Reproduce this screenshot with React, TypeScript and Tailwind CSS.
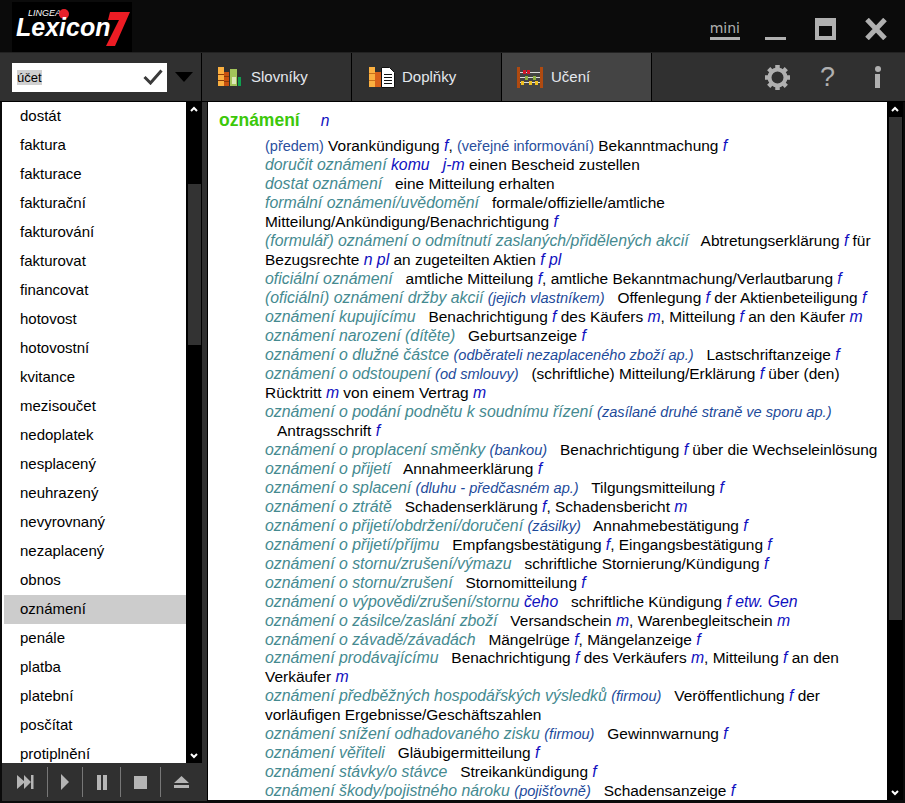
const WORDS = [
  "dostát", "faktura", "fakturace", "fakturační", "fakturování", "fakturovat", "financovat",
  "hotovost", "hotovostní", "kvitance", "mezisoučet", "nedoplatek", "nesplacený", "neuhrazený",
  "nevyrovnaný", "nezaplacený", "obnos", "oznámení", "penále", "platba", "platební", "posčítat",
  "protiplnění",
];

// t = teal phrase, b = blue note, n = italic note, g = gram (italic blue), x = plain german
type Part = ["t" | "b" | "n" | "g" | "x", string];

const ENTRY: Part[][] = [
  [["b", "(předem)"], ["x", " Vorankündigung "], ["g", "f"], ["x", ", "], ["b", "(veřejné informování)"], ["x", " Bekanntmachung "], ["g", "f"]],
  [["t", "doručit oznámení "], ["g", "komu   j-m"], ["x", " einen Bescheid zustellen"]],
  [["t", "dostat oznámení"], ["x", "   eine Mitteilung erhalten"]],
  [["t", "formální oznámení/uvědomění"], ["x", "   formale/offizielle/amtliche"]],
  [["x", "Mitteilung/Ankündigung/Benachrichtigung "], ["g", "f"]],
  [["t", "(formulář) oznámení o odmítnutí zaslaných/přidělených akcií"], ["x", "   Abtretungserklärung "], ["g", "f"], ["x", " für"]],
  [["x", "Bezugsrechte "], ["g", "n pl"], ["x", " an zugeteilten Aktien "], ["g", "f pl"]],
  [["t", "oficiální oznámení"], ["x", "   amtliche Mitteilung "], ["g", "f"], ["x", ", amtliche Bekanntmachung/Verlautbarung "], ["g", "f"]],
  [["t", "(oficiální) oznámení držby akcií "], ["n", "(jejich vlastníkem)"], ["x", "   Offenlegung "], ["g", "f"], ["x", " der Aktienbeteiligung "], ["g", "f"]],
  [["t", "oznámení kupujícímu"], ["x", "   Benachrichtigung "], ["g", "f"], ["x", " des Käufers "], ["g", "m"], ["x", ", Mitteilung "], ["g", "f"], ["x", " an den Käufer "], ["g", "m"]],
  [["t", "oznámení narození (dítěte)"], ["x", "   Geburtsanzeige "], ["g", "f"]],
  [["t", "oznámení o dlužné částce "], ["n", "(odběrateli nezaplaceného zboží ap.)"], ["x", "   Lastschriftanzeige "], ["g", "f"]],
  [["t", "oznámení o odstoupení "], ["n", "(od smlouvy)"], ["x", "   (schriftliche) Mitteilung/Erklärung "], ["g", "f"], ["x", " über (den)"]],
  [["x", "Rücktritt "], ["g", "m"], ["x", " von einem Vertrag "], ["g", "m"]],
  [["t", "oznámení o podání podnětu k soudnímu řízení "], ["n", "(zasílané druhé straně ve sporu ap.)"]],
  [["x", "   Antragsschrift "], ["g", "f"]],
  [["t", "oznámení o proplacení směnky "], ["n", "(bankou)"], ["x", "   Benachrichtigung "], ["g", "f"], ["x", " über die Wechseleinlösung"]],
  [["t", "oznámení o přijetí"], ["x", "   Annahmeerklärung "], ["g", "f"]],
  [["t", "oznámení o splacení "], ["n", "(dluhu - předčasném ap.)"], ["x", "   Tilgungsmitteilung "], ["g", "f"]],
  [["t", "oznámení o ztrátě"], ["x", "   Schadenserklärung "], ["g", "f"], ["x", ", Schadensbericht "], ["g", "m"]],
  [["t", "oznámení o přijetí/obdržení/doručení "], ["n", "(zásilky)"], ["x", "   Annahmebestätigung "], ["g", "f"]],
  [["t", "oznámení o přijetí/příjmu"], ["x", "   Empfangsbestätigung "], ["g", "f"], ["x", ", Eingangsbestätigung "], ["g", "f"]],
  [["t", "oznámení o stornu/zrušení/výmazu"], ["x", "   schriftliche Stornierung/Kündigung "], ["g", "f"]],
  [["t", "oznámení o stornu/zrušení"], ["x", "   Stornomitteilung "], ["g", "f"]],
  [["t", "oznámení o výpovědi/zrušení/stornu "], ["g", "čeho"], ["x", "   schriftliche Kündigung "], ["g", "f etw. Gen"]],
  [["t", "oznámení o zásilce/zaslání zboží"], ["x", "   Versandschein "], ["g", "m"], ["x", ", Warenbegleitschein "], ["g", "m"]],
  [["t", "oznámení o závadě/závadách"], ["x", "   Mängelrüge "], ["g", "f"], ["x", ", Mängelanzeige "], ["g", "f"]],
  [["t", "oznámení prodávajícímu"], ["x", "   Benachrichtigung "], ["g", "f"], ["x", " des Verkäufers "], ["g", "m"], ["x", ", Mitteilung "], ["g", "f"], ["x", " an den"]],
  [["x", "Verkäufer "], ["g", "m"]],
  [["t", "oznámení předběžných hospodářských výsledků "], ["n", "(firmou)"], ["x", "   Veröffentlichung "], ["g", "f"], ["x", " der"]],
  [["x", "vorläufigen Ergebnisse/Geschäftszahlen"]],
  [["t", "oznámení snížení odhadovaného zisku "], ["n", "(firmou)"], ["x", "   Gewinnwarnung "], ["g", "f"]],
  [["t", "oznámení věřiteli"], ["x", "   Gläubigermitteilung "], ["g", "f"]],
  [["t", "oznámení stávky/o stávce"], ["x", "   Streikankündigung "], ["g", "f"]],
  [["t", "oznámení škody/pojistného nároku "], ["n", "(pojišťovně)"], ["x", "   Schadensanzeige "], ["g", "f"]],
];

const PART_CLS = {
  t: "italic text-[15.85px] text-[#458a90]",
  b: "text-[14.5px] text-[#2a4f9e]",
  n: "italic text-[14.6px] text-[#1d4a9a]",
  g: "italic text-[15.8px] text-[#1010c0]",
  x: "text-[15.45px] text-black",
};

function BooksIcon() {
  return (
    <svg width="24" height="20" viewBox="0 0 24 20">
      <rect x="0" y="0" width="6" height="19" fill="#fbb040" />
      <rect x="6" y="5" width="5" height="14" fill="#c8500f" />
      <rect x="12" y="2" width="7" height="17" fill="#a3c45a" />
      <rect x="14" y="10" width="4" height="7" fill="#dde8b8" />
      <rect x="20" y="10" width="3" height="9" fill="#10a050" />
      <path d="M0 7.500h6M0 13.500h6M6 9.500h5M6 14.500h5" stroke="#8a3a08" />
    </svg>
  );
}

function AddonsIcon() {
  return (
    <svg width="26" height="21" viewBox="0 0 26 21">
      <rect x="0" y="0" width="6" height="20" fill="#fbb040" />
      <rect x="6" y="5" width="6" height="15" fill="#d8611a" />
      <path d="M0 6.500h6M0 13.500h6" stroke="#c8701a" />
      <path d="M12.500 0.500h8l5 5v15h-13z" fill="#fff" stroke="#111" />
      <path d="M15 7.500h8M15 10.500h8M15 13.500h8M15 16.500h8" stroke="#111" />
    </svg>
  );
}

function AbacusIcon() {
  return (
    <svg width="26" height="21" viewBox="0 0 26 21">
      <rect x="0" y="0" width="3" height="21" fill="#b04a10" />
      <rect x="23" y="0" width="3" height="21" fill="#b04a10" />
      <path d="M3 5.500h20M3 10.500h20M3 15.500h20" stroke="#ddd" />
      <rect x="6" y="3" width="3" height="4" fill="#d01828" />
      <rect x="10" y="3" width="3" height="4" fill="#d01828" />
      <rect x="8" y="9" width="3" height="4" fill="#8fb040" />
      <rect x="16" y="9" width="3" height="4" fill="#8fb040" />
      <rect x="4" y="14" width="3" height="4" fill="#f0c020" />
      <rect x="12" y="14" width="3" height="4" fill="#f0c020" />
      <rect x="18" y="14" width="3" height="4" fill="#f0c020" />
    </svg>
  );
}

function GearIcon() {
  return (
    <svg width="25" height="25" viewBox="0 0 25 25">
      <circle cx="12.500" cy="12.500" r="8" fill="none" stroke="#b0b0b0" strokeWidth="4" />
      <g stroke="#b0b0b0" strokeWidth="4.500">
        <path d="M12.500 0v4M12.500 21v4M0 12.500h4M21 12.500h4" />
        <path d="M3.700 3.700l2.800 2.800M18.500 18.500l2.800 2.800M21.300 3.700l-2.800 2.800M6.500 18.500l-2.800 2.800" />
      </g>
    </svg>
  );
}

function NavTab({ icon, label, active, cls }: { icon: React.ReactNode; label: string; active?: boolean; cls: string }) {
  return (
    <div className={`flex h-full items-center border-r border-black text-[15px] text-[#e4e8ee] ${cls} ${active ? "bg-[#444444]" : ""}`}>
      {icon}
      <span>{label}</span>
    </div>
  );
}

function Chevron({ up }: { up?: boolean }) {
  return (
    <svg width="16" height="14" viewBox="0 0 16 14" className="shrink-0">
      <path d={up ? "M5 9l3-3 3 3" : "M5 5l3 3 3-3"} fill="none" stroke="#fff" strokeWidth="2" />
    </svg>
  );
}

function Scrollbar({ thumbTop, thumbHeight }: { thumbTop: string; thumbHeight: string }) {
  return (
    <div className="flex w-4 shrink-0 flex-col bg-black">
      <Chevron up />
      <div className="min-h-0 flex-1">
        <div className={`ml-[2px] w-[13px] bg-[#333333] ${thumbTop} ${thumbHeight}`} />
      </div>
      <Chevron />
    </div>
  );
}

function PlayerBar() {
  const sep = <div className="h-[30px] w-px bg-[#777777]" />;
  return (
    <div className="flex h-[38px] shrink-0 items-center justify-between bg-[#303030] pl-[15px] pr-[13px]">
      <svg width="17" height="14" viewBox="0 0 17 14"><path d="M0 0l8 7-8 7zM7 0l7 7-7 7zM14 0h2.500v14H14z" fill="#b5b5b5" /></svg>
      {sep}
      <svg width="8" height="16" viewBox="0 0 8 16"><path d="M0 0l8 8-8 8z" fill="#b5b5b5" /></svg>
      {sep}
      <svg width="10" height="15" viewBox="0 0 10 15"><path d="M0 0h4v15H0zM6 0h4v15H6z" fill="#b5b5b5" /></svg>
      {sep}
      <svg width="13" height="13" viewBox="0 0 13 13"><rect width="13" height="13" fill="#b5b5b5" /></svg>
      {sep}
      <svg width="15" height="12" viewBox="0 0 15 12"><path d="M7.500 0L15 7H0zM0 9h15v3H0z" fill="#b5b5b5" /></svg>
    </div>
  );
}

export default function App() {
  return (
    <div className="flex h-[803px] w-[905px] flex-col overflow-hidden bg-[#0b0b0b] font-['Liberation_Sans',Arial,sans-serif]">
      {/* title bar */}
      <div className="flex h-[52px] shrink-0 items-start justify-between">
        <div className="relative ml-3 mt-[2px] h-[50px] w-[120px] bg-black">
          <span className="absolute left-[16px] top-[6px] text-[9px] italic leading-[10px] text-white">LINGEA</span>
          <span className="absolute left-[47px] top-[7px] h-[10px] w-[10px] rounded-full bg-[#e8202a]" />
          <span className="absolute left-[4px] top-[16px] text-[25px] font-bold italic leading-[18px] text-white">Lexicon</span>
          <svg width="24" height="34" viewBox="0 0 24 34" className="absolute left-[94px] top-[10px]">
            <path d="M4 0h20L9 34H0L13 8H2z" fill="#ed1c24" />
          </svg>
        </div>
        <div className="mr-[18px] mt-[18px] flex items-start">
          <span className="mt-[2px] border-b-[3px] border-[#b0b0b0] font-['DejaVu_Sans',sans-serif] text-[14px] leading-[17px] text-[#b0b0b0]">mini</span>
          <div className="ml-[25px] mt-[19px] h-[3px] w-[21px] bg-[#b0b0b0]" />
          <div className="ml-[29px] h-[22px] w-[21px] border-4 border-t-8 border-[#b0b0b0]" />
          <svg width="22" height="22" viewBox="0 0 22 22" className="ml-[29px]">
            <path d="M2 1.500l18 19M20 1.500L2 20.500" stroke="#b0b0b0" strokeWidth="5" />
          </svg>
        </div>
      </div>

      {/* toolbar */}
      <div className="flex h-[49px] shrink-0 border-t border-[#222222] bg-[#303030]">
        <div className="flex w-[202px] shrink-0 items-center border-r border-black pl-3">
          <div className="flex h-[29px] w-[155px] items-center justify-between bg-white pl-[5px] pr-1">
            <span className="bg-[#d0d0d0] text-[13px] leading-[15px] text-black">účet</span>
            <svg width="20" height="16" viewBox="0 0 20 16">
              <path d="M1.500 8l6 6L18.500 1.500" fill="none" stroke="#3a3a3a" strokeWidth="3" />
            </svg>
          </div>
          <div className="ml-2 h-0 w-0 border-x-[9px] border-t-[10px] border-x-transparent border-t-black" />
        </div>
        <NavTab icon={<BooksIcon />} label="Slovníky" cls="w-[150px] gap-[9px] pl-4" />
        <NavTab icon={<AddonsIcon />} label="Doplňky" cls="w-[150px] gap-[7px] pl-[17px]" />
        <NavTab icon={<AbacusIcon />} label="Učení" active cls="w-[150px] gap-2 pl-[15px]" />
        <div className="flex flex-1 items-center justify-end pr-[25px] text-[#b0b0b0]">
          <GearIcon />
          <span className="ml-[30px] text-[27px] leading-none">?</span>
          <div className="ml-[40px] flex w-[5px] flex-col items-center gap-[2px]">
            <div className="h-[6px] w-[6px] shrink-0 rounded-full bg-[#b0b0b0]" />
            <div className="h-[14px] w-[5px] bg-[#b0b0b0]" />
          </div>
        </div>
      </div>

      {/* body */}
      <div className="mb-[2px] flex min-h-0 flex-1 border-t border-black">
        <div className="flex w-[202px] shrink-0 flex-col pl-[2px]">
          <div className="flex min-h-0 flex-1">
            <div className="min-w-0 flex-1 overflow-hidden bg-white pl-[2px]">
              {WORDS.map((w) => (
                <div key={w} className={`flex h-[29px] items-center pb-px pl-4 text-[15px] text-black ${w === "oznámení" ? "bg-[#cccccc]" : ""}`}>
                  {w}
                </div>
              ))}
            </div>
            <Scrollbar thumbTop="mt-[68px]" thumbHeight="h-[161px]" />
          </div>
          <PlayerBar />
        </div>
        <div className="w-[6px] shrink-0 border-r border-black bg-[#303030]" />
        <div className="mb-px mr-[2px] flex min-w-0 flex-1">
          <div className="min-w-0 flex-1 overflow-hidden bg-white pl-[11px]">
            <div className="mt-[6px] flex h-[25px] items-center text-[17.5px] font-bold text-[#3cc80a]">
              oznámení
              <span className="ml-[21px] text-[15.6px] font-normal italic text-[#1010c0]">n</span>
            </div>
            <div className="mt-[4.33px] pl-[46px]">
              {ENTRY.map((line, i) => (
                <div key={i} className="h-[18.97px] whitespace-pre leading-[18.97px]">
                  {line.map(([k, text], j) => (
                    <span key={j} className={PART_CLS[k]}>{text}</span>
                  ))}
                </div>
              ))}
            </div>
          </div>
          <Scrollbar thumbTop="mt-px" thumbHeight="h-[503px]" />
        </div>
      </div>
    </div>
  );
}
